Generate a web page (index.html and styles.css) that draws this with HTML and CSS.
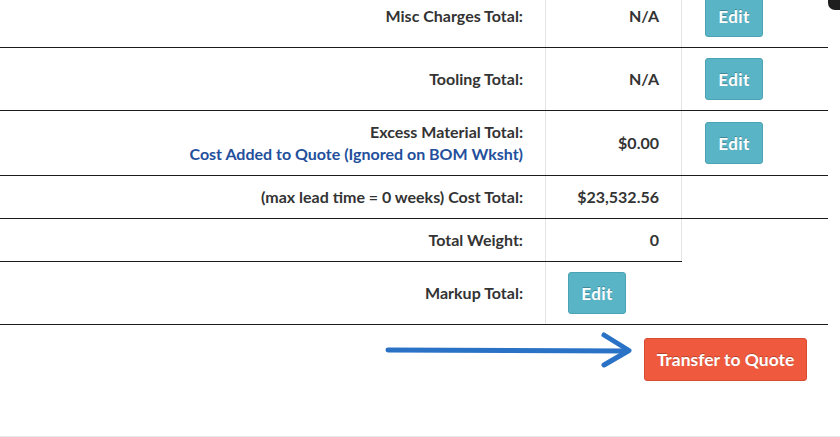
FILE: index.html
```html
<!DOCTYPE html>
<html>
<head>
<meta charset="utf-8">
<link rel="stylesheet" href="styles.css">
</head>
<body>
<div class="corner"></div>
<div class="page">
  <table class="totals">
    <tr class="btn-row">
      <td class="label">Misc Charges Total:</td>
      <td class="value">N/A</td>
      <td class="action"><button class="btn btn-edit">Edit</button></td>
    </tr>
    <tr class="btn-row">
      <td class="label">Tooling Total:</td>
      <td class="value">N/A</td>
      <td class="action"><button class="btn btn-edit">Edit</button></td>
    </tr>
    <tr class="btn-row">
      <td class="label">Excess Material Total:<br><span class="note">Cost Added to Quote (Ignored on BOM Wksht)</span></td>
      <td class="value">$0.00</td>
      <td class="action"><button class="btn btn-edit">Edit</button></td>
    </tr>
    <tr>
      <td class="label">(max lead time = 0 weeks) Cost Total:</td>
      <td class="value">$23,532.56</td>
      <td class="action"></td>
    </tr>
    <tr>
      <td class="label">Total Weight:</td>
      <td class="value">0</td>
    </tr>
    <tr class="btn-row">
      <td class="label">Markup Total:</td>
      <td class="value left"><button class="btn btn-edit">Edit</button></td>
      <td class="action bare"></td>
    </tr>
  </table>
  <div class="footer-row">
    <svg class="arrow" width="252" height="40" viewBox="0 0 252 40">
      <path d="M5 21 L244 22" stroke="#2a72c6" stroke-width="5" stroke-linecap="round" fill="none"/>
      <path d="M221 6 L246 21.5 L221 36" stroke="#2a72c6" stroke-width="5" stroke-linecap="round" stroke-linejoin="round" fill="none"/>
    </svg>
    <button class="btn btn-transfer">Transfer to Quote</button>
  </div>
  <div class="bottom-rule"></div>
</div>
</body>
</html>
```
FILE: styles.css
```css
html, body {
  margin: 0;
  padding: 0;
  background: #ffffff;
}
body {
  font-family: "Lato", "Liberation Sans", sans-serif;
  font-weight: 700;
  color: #333333;
  overflow: hidden;
}
.corner {
  position: fixed;
  top: -22px;
  right: -12px;
  width: 24px;
  height: 32px;
  border-radius: 7px;
  background: #1e1e1e;
}
.page {
  width: 840px;
  margin-top: -15px;
}
.totals {
  width: 828px;
  border-collapse: collapse;
  table-layout: fixed;
}
.totals td {
  border-bottom: 1px solid #1c1c1c;
  font-size: 16px;
  line-height: 22px;
  padding: 10px 22px;
  vertical-align: middle;
}
.totals td.label {
  width: 501px;
  text-align: right;
}
.totals td.value {
  width: 91px;
  text-align: right;
  border-left: 1px solid #e4e4e4;
  border-right: 1px solid #e4e4e4;
}
.totals td.value.left {
  text-align: left;
  padding-left: 22px;
  border-right: none;
}
.totals td.action {
  padding-left: 23px;
  padding-right: 10px;
}
.note {
  color: #234f9c;
}
.btn {
  font-family: "Lato", "Liberation Sans", sans-serif;
  font-weight: 700;
  color: #ffffff;
  border-radius: 3px;
  text-shadow: 0 -1px 0 rgba(0, 0, 0, 0.25);
  cursor: pointer;
  display: inline-block;
}
.btn-edit {
  width: 58px;
  height: 42px;
  font-size: 17px;
  letter-spacing: 0.4px;
  background: #59b4c6;
  border: 1px solid #4aa2b4;
  padding: 0;
  vertical-align: middle;
}
.footer-row {
  display: flex;
  justify-content: flex-end;
  align-items: flex-start;
  width: 828px;
  height: 111px;
}
.arrow {
  margin-top: 4px;
  margin-right: 9px;
}
.btn-transfer {
  margin-top: 13px;
  margin-right: 21px;
  width: 163px;
  height: 43px;
  font-size: 17.5px;
  background: #ef5a3e;
  border: 1px solid #d84c32;
  padding: 0;
}
.bottom-rule {
  width: 840px;
  border-top: 1.5px solid #e6e9ec;
}
```
